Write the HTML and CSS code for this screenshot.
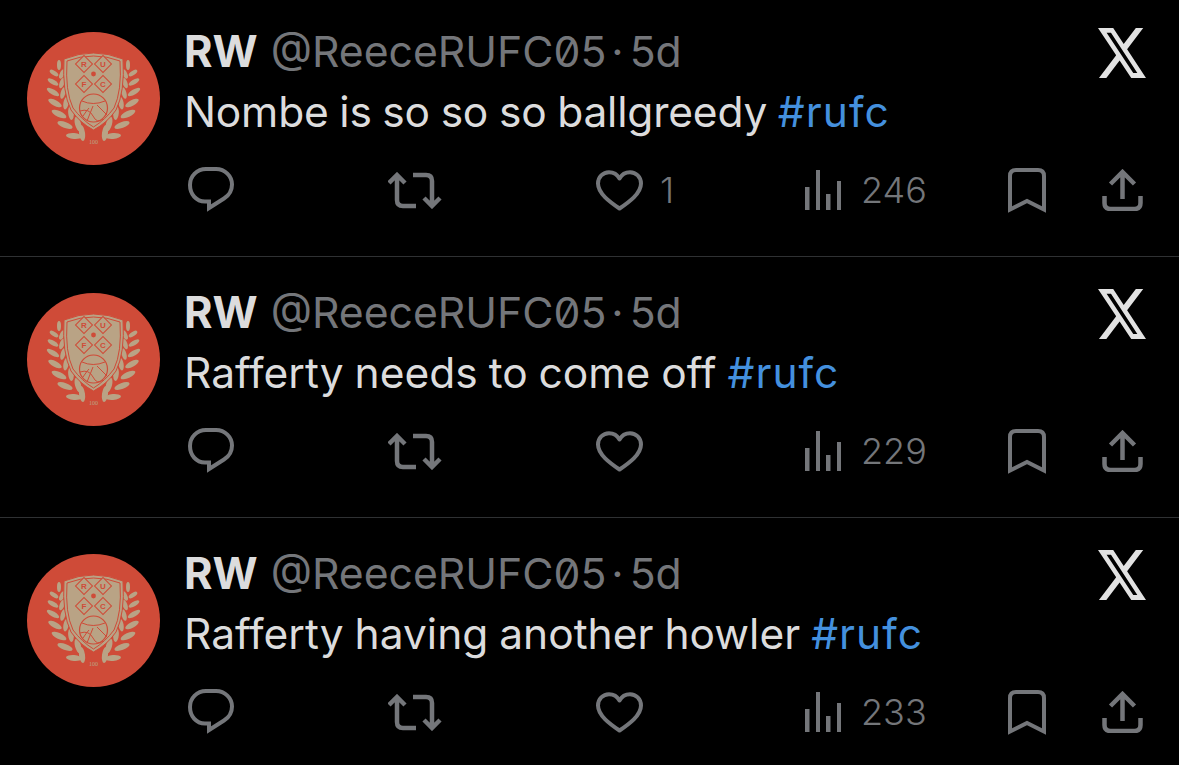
FILE: index.html
```html
<!DOCTYPE html>
<html lang="en">
<head>
    <meta charset="UTF-8">
    <meta name="viewport" content="width=device-width, initial-scale=1.0">
    <title>RW tweets</title>
    <link rel="stylesheet" href="styles.css">
</head>
<body>
    <!-- shared icons -->
    <svg class="sprite" aria-hidden="true">
        <symbol id="i-crest" viewBox="0 0 133 133">
            <circle cx="66.5" cy="66.5" r="66.5" fill="#cf4b38"/>
            <g id="laurel" fill="#b9a385" transform="translate(2 0)">
                <ellipse cx="30" cy="33" rx="2" ry="5"/>
                <ellipse cx="25" cy="41" rx="5" ry="2.2" transform="rotate(35 25 41)"/>
                <ellipse cx="33" cy="42" rx="2.2" ry="5" transform="rotate(25 33 42)"/>
                <ellipse cx="24" cy="50" rx="6" ry="2.4" transform="rotate(30 24 50)"/>
                <ellipse cx="33" cy="51" rx="2.4" ry="5.5" transform="rotate(20 33 51)"/>
                <ellipse cx="24" cy="60" rx="7" ry="2.6" transform="rotate(30 24 60)"/>
                <ellipse cx="34" cy="61" rx="2.4" ry="6" transform="rotate(15 34 61)"/>
                <ellipse cx="26" cy="71" rx="7.5" ry="2.8" transform="rotate(28 26 71)"/>
                <ellipse cx="37" cy="71" rx="2.6" ry="6.5" transform="rotate(10 37 71)"/>
                <ellipse cx="30" cy="82" rx="8" ry="3" transform="rotate(25 30 82)"/>
                <ellipse cx="42" cy="81" rx="2.8" ry="7" transform="rotate(-5 42 81)"/>
                <ellipse cx="36" cy="93" rx="8" ry="3" transform="rotate(20 36 93)"/>
                <ellipse cx="49" cy="92" rx="3" ry="7.5" transform="rotate(-15 49 92)"/>
                <ellipse cx="45" cy="104" rx="8" ry="3" transform="rotate(5 45 104)"/>
                <ellipse cx="53" cy="101" rx="3" ry="8" transform="rotate(-8 53 101)"/>
            </g>
            <use href="#laurel" transform="translate(133 0) scale(-1 1)"/>
            <path d="M37 27Q52 21 66.5 21T96 27Q98 60 89 78 80 91 66.5 98 53 91 44 78 35 60 37 27Z" fill="#b9a385" stroke="#cf4b38" stroke-width="1"/>
            <path d="M40 29Q53 24 66.5 24T93 29Q95 59 87 76 78 88 66.5 95 55 88 46 76 38 59 40 29Z" fill="#b9a385" stroke="#cf4b38" stroke-width="1"/>
            <g fill="#b9a385" stroke="#cf4b38" stroke-width="1">
                <rect x="51" y="26" width="12" height="12" transform="rotate(45 57 32)"/>
                <rect x="70" y="26" width="12" height="12" transform="rotate(45 76 32)"/>
                <rect x="51" y="46" width="12" height="12" transform="rotate(45 57 52)"/>
                <rect x="70" y="46" width="12" height="12" transform="rotate(45 76 52)"/>
            </g>
            <circle cx="66.5" cy="42" r="2.4" fill="#cf4b38"/>
            <g class="crest-letter">
                <text x="57" y="35">R</text>
                <text x="76" y="35">U</text>
                <text x="57" y="55">F</text>
                <text x="76" y="55">C</text>
            </g>
            <circle cx="66.5" cy="76" r="14" fill="#b9a385" stroke="#cf4b38" stroke-width="1.2"/>
            <path d="M55 69Q66 74 78 69M53 79Q62 76 66 84T76 87M66 74 60 89M70 73 80 83M56 84Q60 78 62 76" fill="none" stroke="#cf4b38" stroke-width="1"/>
            <text class="crest-year" x="66.5" y="112">100</text>
        </symbol>

        <symbol id="i-x" viewBox="1.25 2.25 21.55 19.5" preserveAspectRatio="none">
            <path d="M18.244 2.25h3.308l-7.227 8.26 8.502 11.24H16.17l-5.214-6.817L4.99 21.75H1.68l7.73-8.835L1.254 2.25H8.08l4.713 6.231zm-1.161 17.52h1.833L7.084 4.126H5.117z" fill="currentColor"/>
        </symbol>

        <symbol id="i-reply" viewBox="0 0 46 46">
            <path d="M18 2h10c9 0 16 7 16 15.500 0 7-4 11.500-8 14l-15 9.500v-6.500h-4C8 34.500 2 27 2 18 2 9 9 2 18 2z" fill="none" stroke="currentColor" stroke-width="4"/>
        </symbol>
        <symbol id="i-retweet" viewBox="0 0 54 37">
            <path d="M9 3v25q0 6 6 6h13M1 11l8-8 8 8M25 3h13q6 0 6 6v25M36 26l8 8 8-8" fill="none" stroke="currentColor" stroke-width="4.500"/>
        </symbol>
        <symbol id="i-heart" viewBox="0 0 47 41">
            <path d="M23.500 38.500C14 32 2 23.500 2 13.500 2 7 7 2.200 13 2.200c4.500 0 8.300 2.300 10.500 6.300C25.700 4.500 29.500 2.200 34 2.200c6 0 11 4.800 11 11.300 0 10-12 18.500-21.500 25z" fill="none" stroke="currentColor" stroke-width="4" stroke-linejoin="round"/>
        </symbol>
        <symbol id="i-views" viewBox="0 0 37 40">
            <rect x="1" y="17" width="4.500" height="23" fill="currentColor"/>
            <rect x="12" y="0" width="4" height="40" fill="currentColor"/>
            <rect x="22" y="24" width="4.500" height="16" fill="currentColor"/>
            <rect x="33" y="11" width="4" height="29" fill="currentColor"/>
        </symbol>
        <symbol id="i-bookmark" viewBox="0 0 38 45">
            <path d="M2 41.500V8q0-6 6-6h22q6 0 6 6v33.500l-17-8.500z" fill="none" stroke="currentColor" stroke-width="4"/>
        </symbol>
        <symbol id="i-share" viewBox="0 0 41 42">
            <path d="M20.500 30V3M8.500 15l12-12 12 12M2.500 27v7q0 6 6 6h24q6 0 6-6v-7" fill="none" stroke="currentColor" stroke-width="4.500"/>
        </symbol>
    </svg>

    <main class="feed">
        <article class="tweet">
            <svg class="avatar"><use href="#i-crest"/></svg>
            <div class="tweet-body">
                <header class="tweet-head">
                    <div class="meta"><b class="name">RW</b><span class="handle">@ReeceRUFC05</span><span class="dot">·</span><span class="age">5d</span></div>
                    <svg class="x-logo"><use href="#i-x"/></svg>
                </header>
                <p class="text text-tight">Nombe is so so so ballgreedy <a class="tag">#rufc</a></p>
                <div class="actions">
                    <span class="action"><svg class="ic-reply"><use href="#i-reply"/></svg></span>
                    <span class="action"><svg class="ic-retweet"><use href="#i-retweet"/></svg></span>
                    <span class="action"><svg class="ic-heart"><use href="#i-heart"/></svg><span class="count count-like">1</span></span>
                    <span class="action"><svg class="ic-views"><use href="#i-views"/></svg><span class="count">246</span></span>
                    <span class="action"><svg class="ic-bookmark"><use href="#i-bookmark"/></svg></span>
                    <span class="action"><svg class="ic-share"><use href="#i-share"/></svg></span>
                </div>
            </div>
        </article>

        <article class="tweet">
            <svg class="avatar"><use href="#i-crest"/></svg>
            <div class="tweet-body">
                <header class="tweet-head">
                    <div class="meta"><b class="name">RW</b><span class="handle">@ReeceRUFC05</span><span class="dot">·</span><span class="age">5d</span></div>
                    <svg class="x-logo"><use href="#i-x"/></svg>
                </header>
                <p class="text">Rafferty needs to come off <a class="tag">#rufc</a></p>
                <div class="actions">
                    <span class="action"><svg class="ic-reply"><use href="#i-reply"/></svg></span>
                    <span class="action"><svg class="ic-retweet"><use href="#i-retweet"/></svg></span>
                    <span class="action"><svg class="ic-heart"><use href="#i-heart"/></svg></span>
                    <span class="action"><svg class="ic-views"><use href="#i-views"/></svg><span class="count">229</span></span>
                    <span class="action"><svg class="ic-bookmark"><use href="#i-bookmark"/></svg></span>
                    <span class="action"><svg class="ic-share"><use href="#i-share"/></svg></span>
                </div>
            </div>
        </article>

        <article class="tweet">
            <svg class="avatar"><use href="#i-crest"/></svg>
            <div class="tweet-body">
                <header class="tweet-head">
                    <div class="meta"><b class="name">RW</b><span class="handle">@ReeceRUFC05</span><span class="dot">·</span><span class="age">5d</span></div>
                    <svg class="x-logo"><use href="#i-x"/></svg>
                </header>
                <p class="text">Rafferty having another howler <a class="tag">#rufc</a></p>
                <div class="actions">
                    <span class="action"><svg class="ic-reply"><use href="#i-reply"/></svg></span>
                    <span class="action"><svg class="ic-retweet"><use href="#i-retweet"/></svg></span>
                    <span class="action"><svg class="ic-heart"><use href="#i-heart"/></svg></span>
                    <span class="action"><svg class="ic-views"><use href="#i-views"/></svg><span class="count">233</span></span>
                    <span class="action"><svg class="ic-bookmark"><use href="#i-bookmark"/></svg></span>
                    <span class="action"><svg class="ic-share"><use href="#i-share"/></svg></span>
                </div>
            </div>
        </article>
    </main>
</body>
</html>
```

FILE: styles.css
```css
* {
    box-sizing: border-box;
}
html, body {
    height: 100%;
}
body {
    margin: 0;
    background: #000;
    color: #dcdcdd;
    font-family: Inter, "Liberation Sans", sans-serif;
    overflow: hidden;
}
.sprite {
    display: none;
}
.tweet {
    display: flex;
    height: 261px;
    padding: 36px 33px 0 27px;
    border-bottom: 1px solid #2f3133;
}
.tweet:first-child {
    height: 257px;
    padding-top: 32px;
}
.tweet:last-child {
    border-bottom: 0;
}
.avatar {
    flex: none;
    width: 133px;
    height: 133px;
    margin-right: 25px;
}
.crest-letter text {
    fill: #cf4b38;
    font: bold 8px "Liberation Sans", sans-serif;
    text-anchor: middle;
}
.crest-year {
    fill: #b9a385;
    font: 6px "Liberation Serif", serif;
    text-anchor: middle;
}
.tweet-body {
    flex: 1;
    min-width: 0;
}
.tweet-head {
    display: flex;
    justify-content: space-between;
    height: 51px;
    margin-top: -4px;
}
.meta {
    font-size: 42.7px;
    line-height: 48px;
    margin-top: -1px;
    margin-left: -1px;
    white-space: nowrap;
}
.name {
    font-weight: 700;
    font-size: 43.5px;
    margin-right: 13px;
}
.handle, .dot, .age {
    color: #74767a;
    font-variant-numeric: slashed-zero;
}
.dot {
    margin: 0 6px 0 5px;
}
.x-logo {
    width: 48px;
    height: 50px;
    color: #e2e2e2;
}
.text {
    margin: 9px 0 0 -1px;
    font-size: 42.5px;
    line-height: 48px;
    word-spacing: -1px;
    white-space: nowrap;
}
.text-tight {
    letter-spacing: -0.2px;
}
.tag {
    color: #4490de;
    letter-spacing: 1px;
}
.actions {
    display: grid;
    grid-template-columns: 200px 208px 208px 204px 94px auto;
    align-items: center;
    height: 46px;
    margin-top: 31px;
    padding-left: 3px;
    color: #74767a;
}
.action {
    display: flex;
    align-items: center;
}
.ic-reply { width: 46px; height: 46px; }
.ic-retweet { width: 54px; height: 37px; }
.ic-heart { width: 47px; height: 41px; }
.ic-views { width: 37px; height: 40px; }
.ic-bookmark { width: 38px; height: 45px; }
.ic-share { width: 41px; height: 42px; }
.count {
    margin-left: 20px;
    font-size: 36px;
    font-weight: 300;
}
.count-like {
    margin-left: 17px;
}
```
